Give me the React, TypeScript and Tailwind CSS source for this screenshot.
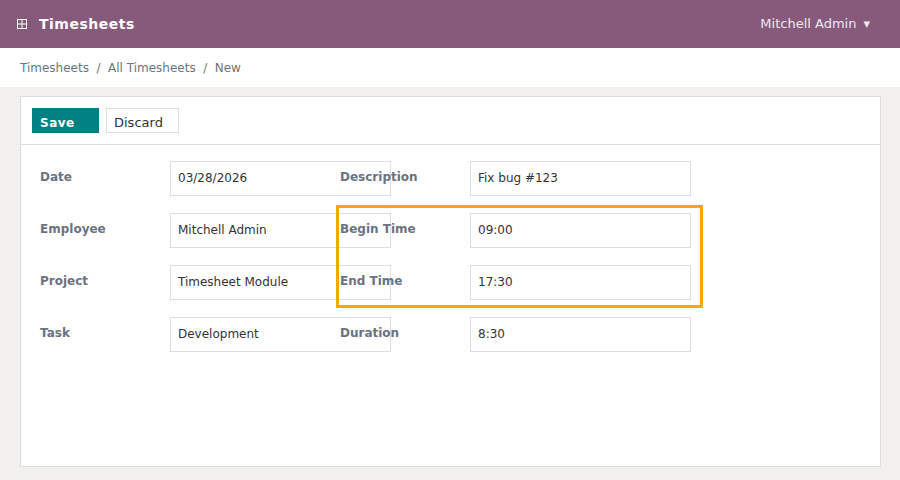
const rows = [
  ["Date", "03/28/2026", "Description", "Fix bug #123"],
  ["Employee", "Mitchell Admin", "Begin Time", "09:00"],
  ["Project", "Timesheet Module", "End Time", "17:30"],
  ["Task", "Development", "Duration", "8:30"],
];

function Field({ label, value }: { label: string; value: string }) {
  return (
    <>
      <div className="relative z-10 pt-[7px] text-[12px] leading-[18px] font-bold text-[#6b7280]">{label}</div>
      <div className="flex h-[35px] w-[221px] items-center border border-[#dddddd] pb-[1px] pl-[7px] text-[12px] text-[#333333]">
        {value}
      </div>
    </>
  );
}

export default function App() {
  return (
    <div className="flex h-[480px] w-[900px] flex-col overflow-hidden bg-[#f1f0ee] font-['DejaVu_Sans',sans-serif]">
      <header className="flex h-12 items-center justify-between bg-[#875a7b] pl-4 pr-[30px] text-white">
        <div className="flex items-center gap-[11px]">
          <svg width="12" height="12" viewBox="0 0 12 12" fill="none" stroke="currentColor" strokeWidth="1">
            <rect x="1.5" y="1.5" width="9" height="9" />
            <path d="M6 1.5v9M1.5 6h9" />
          </svg>
          <span className="text-[14px] font-bold tracking-[0.5px]">Timesheets</span>
        </div>
        <div className="flex items-center gap-[7px] text-[13px] text-[#f0e8ee]">
          <span>Mitchell Admin</span>
          <span>▾</span>
        </div>
      </header>

      <nav className="flex h-[39px] items-center gap-[7.5px] bg-white pl-5 text-[12px] text-[#6c757d]">
        <span>Timesheets</span>
        <span>/</span>
        <span>All Timesheets</span>
        <span>/</span>
        <span>New</span>
      </nav>

      <main className="px-5 pt-[9px]">
        <div className="h-[371px] w-[861px] border border-[#dddddd] bg-white">
          <div className="flex h-[48px] gap-[7px] border-b border-[#dddddd] pl-[11px] pt-[11px]">
            <button className="h-[25px] w-[67px] bg-[#008080] pl-2 pt-1 text-left text-[12px] font-bold tracking-[0.5px] text-white">
              Save
            </button>
            <button className="h-[25px] w-[73px] border border-[#dddddd] pl-[7px] pt-1 text-left text-[13px] text-[#333333]">
              Discard
            </button>
          </div>

          <div className="relative pl-[19px] pt-[16px]">
            <div className="grid grid-cols-[130px_170px_130px_221px] gap-y-[17px]">
              {rows.map((row) => (
                <div key={row[0]} className="contents">
                  <Field label={row[0]} value={row[1]} />
                  <Field label={row[2]} value={row[3]} />
                </div>
              ))}
            </div>
            {/* highlight around the time fields */}
            <div className="absolute left-[315px] top-[60px] z-20 h-[103px] w-[367px] border-[3px] border-[#f5a800]" />
          </div>
        </div>
      </main>
    </div>
  );
}
